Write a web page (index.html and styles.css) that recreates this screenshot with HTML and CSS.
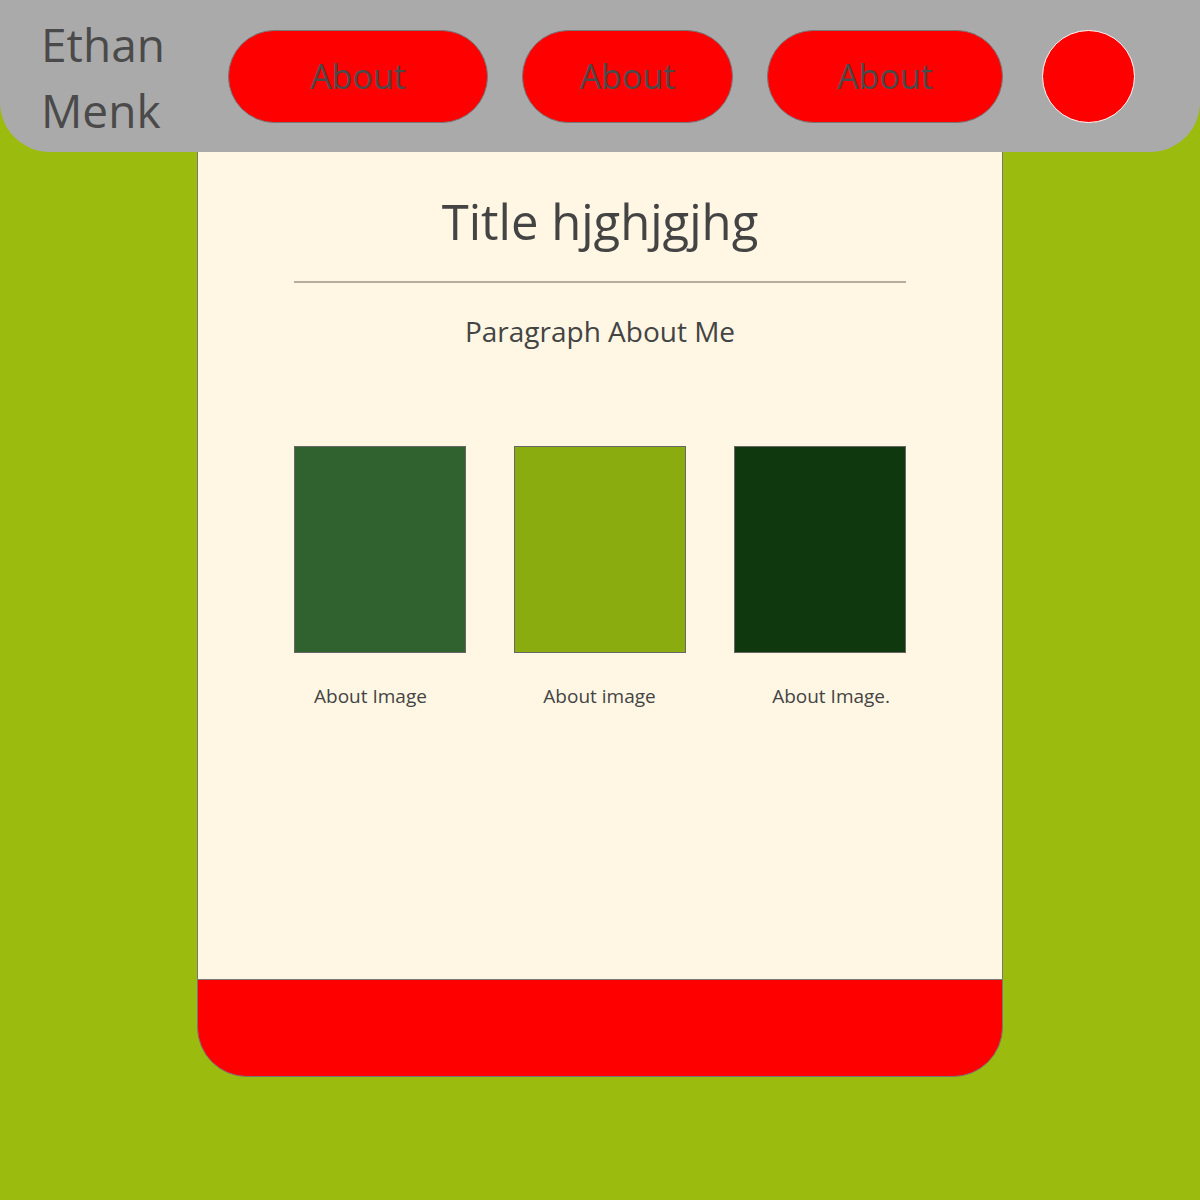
FILE: index.html
```html
<!DOCTYPE html>
<html lang="en">
<head>
<meta charset="utf-8">
<title>Ethan Menk</title>
<link rel="stylesheet" href="styles.css">
</head>
<body>
<header class="topbar">
  <div class="brand">Ethan<br>Menk</div>
  <nav class="nav">
    <a class="pill pill-a" href="#">About</a>
    <a class="pill pill-b" href="#">About</a>
    <a class="pill pill-c" href="#">About</a>
    <span class="dot"></span>
  </nav>
</header>
<main class="card">
  <h1 class="title">Title hjghjgjhg</h1>
  <hr class="rule">
  <p class="lead">Paragraph About Me</p>
  <div class="gallery">
    <div class="tile tile-1"></div>
    <div class="tile tile-2"></div>
    <div class="tile tile-3"></div>
  </div>
  <div class="captions">
    <span class="caption">About Image</span>
    <span class="caption">About image</span>
    <span class="caption">About Image.</span>
  </div>
</main>
<footer class="footer"></footer>
</body>
</html>
```
FILE: styles.css
```css
* { box-sizing: border-box; }
body {
  margin: 0;
  background: #9bbc0f;
  font-family: "Open Sans", "Noto Sans", sans-serif;
  color: #464646;
}
.topbar {
  height: 152px;
  background: #aaaaaa;
  border-radius: 0 0 50px 50px;
  display: flex;
  align-items: center;
  padding-left: 41px;
  position: relative;
  z-index: 1;
}
.brand {
  font-size: 46px;
  line-height: 66px;
  color: #4a4a4a;
  width: 187px;
  margin-top: 2px;
}
.nav {
  display: flex;
  align-items: center;
}
.pill {
  height: 93px;
  border-radius: 47px;
  background: #ff0000;
  border: 1px solid #777;
  color: #4a4a4a;
  text-decoration: none;
  font-size: 34px;
  display: flex;
  align-items: center;
  justify-content: center;
  margin-right: 34px;
}
.pill-a { width: 260px; }
.pill-b { width: 211px; }
.pill-c { width: 236px; margin-right: 39px; }
.dot {
  width: 93px;
  height: 93px;
  border-radius: 50%;
  background: #ff0000;
  border: 1px solid #fff;
}
.card {
  width: 806px;
  height: 827px;
  margin: 0 auto;
  background: #fff7e3;
  border: 1px solid #777;
  border-top: none;
  border-bottom: none;
  padding: 0 96px;
  display: flex;
  flex-direction: column;
}
.title {
  margin: 37px 0 0;
  font-size: 49px;
  font-weight: 400;
  line-height: 64px;
  text-align: center;
  color: #444;
}
.rule {
  margin: 28px 0 0;
  border: none;
  height: 2px;
  background: #b5ada0;
}
.lead {
  margin: 28px 0 0;
  font-size: 28px;
  line-height: 40px;
  text-align: center;
  color: #444;
}
.gallery {
  margin-top: 95px;
  display: flex;
  justify-content: space-between;
}
.tile {
  width: 172px;
  height: 207px;
  border: 1px solid #666;
}
.tile-1 { background: #306230; }
.tile-2 { background: #8bac0f; }
.tile-3 { background: #0f380f; }
.captions {
  margin-top: 29px;
  display: flex;
  justify-content: space-between;
  padding: 0 16px 0 20px;
}
.caption {
  font-size: 19px;
  line-height: 28px;
  color: #444;
}
.footer {
  width: 806px;
  height: 98px;
  margin: 0 auto;
  background: #ff0000;
  border: 1px solid #777;
  border-radius: 0 0 50px 50px;
}
```
